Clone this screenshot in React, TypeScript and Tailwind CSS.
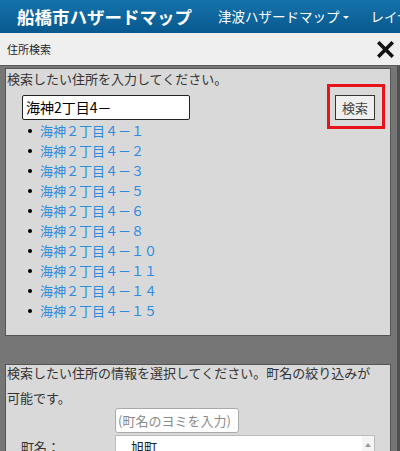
import React from "react";

const results = ["１", "２", "３", "５", "６", "８", "１０", "１１", "１４", "１５"];

const App = () => {
  return (
    <div
      className="w-[400px] h-[451px] overflow-hidden bg-[#767676] flex flex-col"
      style={{ fontFamily: '"Noto Sans CJK JP", "Noto Sans", sans-serif' }}
    >
      {/* top bar */}
      <div className="h-[33px] shrink-0 flex items-center bg-gradient-to-b from-[#1672ab] to-[#07598e] text-white whitespace-nowrap">
        <div className="pl-[17px] text-[17.5px] font-bold leading-none">船橋市ハザードマップ</div>
        <div className="ml-[26px] flex items-center text-[13.5px] leading-none">
          津波ハザードマップ
          <span className="ml-[3px] mt-[1px] border-x-[3px] border-t-[3px] border-x-transparent border-t-white" />
        </div>
        <div className="ml-[22px] text-[13.5px] leading-none">レイヤ</div>
      </div>

      {/* panel header */}
      <div className="h-[33px] shrink-0 flex items-center justify-between pl-[7px] pr-[6px] bg-[#efefef] border-b border-[#5a5a5a]">
        <span className="text-[11px] text-[#222]">住所検索</span>
        <svg width="17" height="17" viewBox="0 0 17 17">
          <path d="M2.5 2.5 L14.5 14.5 M14.5 2.5 L2.5 14.5" stroke="#111" strokeWidth="3.6" strokeLinecap="square" />
        </svg>
      </div>

      {/* content */}
      <div className="flex-1 pl-[5px] pr-[6px] pt-[2px] border-r-[3px] border-[#505050] text-[13px] text-[#333]">
        {/* address search box */}
        <div className="flex border border-[#555] bg-[#d9d9d9] h-[268px]">
          <div className="flex-1 pl-[1px]">
            <div className="leading-[20px]">検索したい住所を入力してください。</div>
            <div className="ml-[15px] mt-[6px] w-[168px] h-[25px] flex items-center px-[3px] bg-white border-[1.5px] border-[#222] rounded-[2px] text-[14px] text-black">
              海神2丁目4－
            </div>
            <ul className="mt-[1px]">
              {results.map((n) => (
                <li key={n} className="h-[20px] flex items-center">
                  <span className="ml-[21px] w-[4px] h-[4px] rounded-full bg-black" />
                  <span className="ml-[8px] text-[#2a8be4]">海神２丁目４－{n}</span>
                </li>
              ))}
            </ul>
          </div>
          <div className="mt-[15px] mr-[5px] self-start border-[3px] border-[#e8141c] pl-[5px] pr-[7px] pt-[8px] pb-[6px]">
            <div className="w-[40px] h-[25px] flex items-center justify-center bg-[#efefef] border border-[#333] text-[13px] text-[#444]">
              検索
            </div>
          </div>
        </div>

        {/* town select box */}
        <div className="mt-[28px] border border-[#555] bg-[#d9d9d9] h-[120px] pl-[1px]">
          <div className="leading-[14px] mt-[1px]">検索したい住所の情報を選択してください。町名の絞り込みが</div>
          <div className="leading-[14px] mt-[11px]">可能です。</div>
          <div className="grid grid-cols-[108px_1fr] mt-[3px]">
            <div />
            <div className="w-[124px] h-[25px] flex items-center px-[2px] bg-white border border-[#aaa] rounded-[3px] text-[#8a8a8a] whitespace-nowrap">
              (町名のヨミを入力)
            </div>
            <div className="pl-[14px] pt-[4px] text-[#333] leading-[20px]">町名：</div>
            <div className="mt-[2px] mr-[15px] h-[40px] flex bg-white border border-[#bbb]">
              <div className="flex-1 pl-[15px] text-[#222] leading-[22px]">旭町</div>
              <div className="w-[12px] flex justify-center pt-[7px] bg-[#f4f4f4]">
                <span className="border-x-[3px] border-b-[4px] border-x-transparent border-b-[#999] h-0" />
              </div>
            </div>
          </div>
        </div>
      </div>
    </div>
  );
};

export default App;
